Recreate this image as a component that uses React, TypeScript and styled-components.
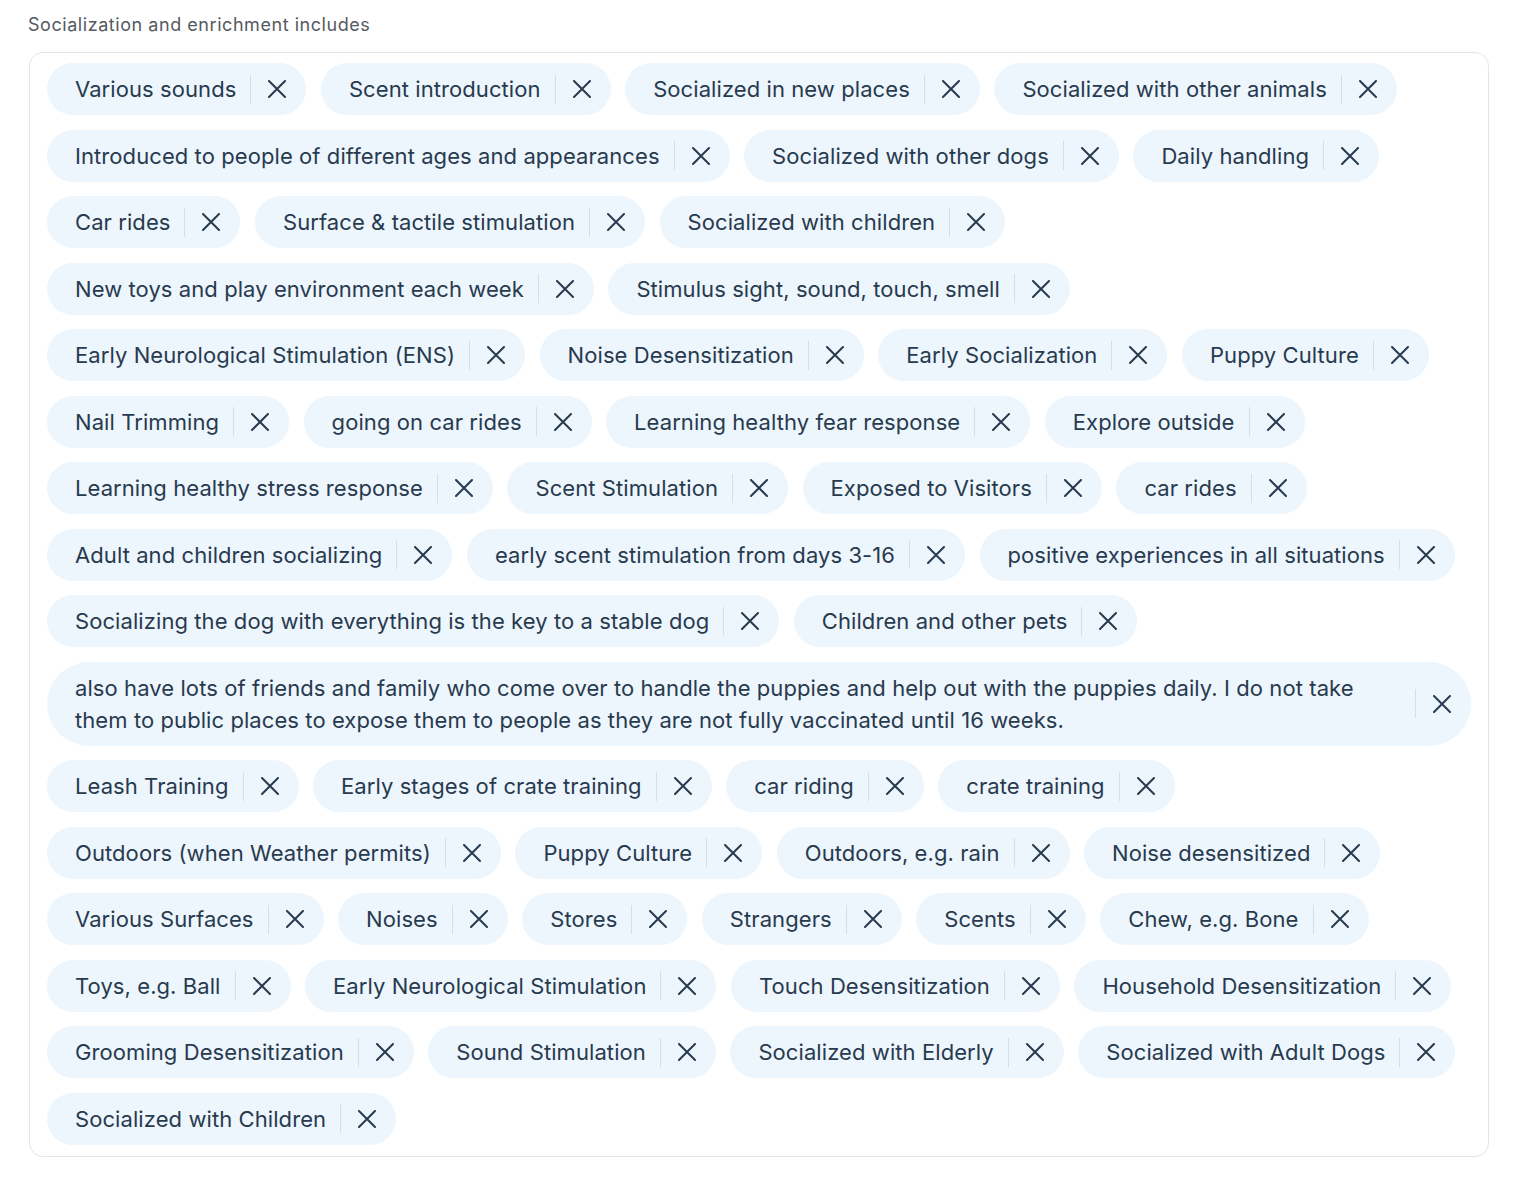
import React from "react";
import styled, { createGlobalStyle } from "styled-components";

const GlobalStyle = createGlobalStyle`
  html, body {
    margin: 0;
    padding: 0;
    background: #ffffff;
  }
  body {
    font-family: Inter, "Noto Sans", "Liberation Sans", sans-serif;
  }
`;

const Page = styled.div`
  padding: 12px 28px 40px 28px;
`;

const Label = styled.div`
  font-family: Inter, "Liberation Sans", sans-serif;
  font-size: 18px;
  letter-spacing: 0.55px;
  line-height: 25px;
  color: #545a61;
  margin-bottom: 15px;
`;

const Box = styled.div`
  border: 1.5px solid #e2e5e9;
  border-radius: 14px;
  padding: 10px 17px 11px 17px;
  margin-left: 1px;
`;

const ChipList = styled.div`
  display: flex;
  flex-wrap: wrap;
  gap: 14.5px 14.5px;
`;

const Chip = styled.div`
  display: flex;
  align-items: center;
  max-width: 100%;
  box-sizing: border-box;
  background: #edf5fd;
  border-radius: 999px;
  padding: 10px 20px 10px 28px;
  color: #283a4e;
  font-size: 22px;
  letter-spacing: 0.08px;
  line-height: 32px;
`;

const ChipText = styled.span`
  flex: 1 1 auto;
  min-width: 0;
`;

const Divider = styled.span`
  flex: none;
  width: 1px;
  height: 29px;
  background: #d6dde5;
  margin-left: 14px;
`;

const RemoveButton = styled.button`
  flex: none;
  display: flex;
  align-items: center;
  justify-content: center;
  margin-left: 17px;
  padding: 0;
  border: none;
  background: transparent;
  color: #283a4e;
  cursor: pointer;
  width: 18px;
  height: 18px;
`;

const XIcon = () => (
  <svg width="18" height="18" viewBox="0 0 18 18" fill="none">
    <path d="M1 1L17 17M17 1L1 17" stroke="currentColor" strokeWidth="2" strokeLinecap="round" />
  </svg>
);

const items: string[] = [
  "Various sounds",
  "Scent introduction",
  "Socialized in new places",
  "Socialized with other animals",
  "Introduced to people of different ages and appearances",
  "Socialized with other dogs",
  "Daily handling",
  "Car rides",
  "Surface & tactile stimulation",
  "Socialized with children",
  "New toys and play environment each week",
  "Stimulus sight, sound, touch, smell",
  "Early Neurological Stimulation (ENS)",
  "Noise Desensitization",
  "Early Socialization",
  "Puppy Culture",
  "Nail Trimming",
  "going on car rides",
  "Learning healthy fear response",
  "Explore outside",
  "Learning healthy stress response",
  "Scent Stimulation",
  "Exposed to Visitors",
  "car rides",
  "Adult and children socializing",
  "early scent stimulation from days 3-16",
  "positive experiences in all situations",
  "Socializing the dog with everything is the key to a stable dog",
  "Children and other pets",
  "also have lots of friends and family who come over to handle the puppies and help out with the puppies daily. I do not take them to public places to expose them to people as they are not fully vaccinated until 16 weeks.",
  "Leash Training",
  "Early stages of crate training",
  "car riding",
  "crate training",
  "Outdoors (when Weather permits)",
  "Puppy Culture",
  "Outdoors, e.g. rain",
  "Noise desensitized",
  "Various Surfaces",
  "Noises",
  "Stores",
  "Strangers",
  "Scents",
  "Chew, e.g. Bone",
  "Toys, e.g. Ball",
  "Early Neurological Stimulation",
  "Touch Desensitization",
  "Household Desensitization",
  "Grooming Desensitization",
  "Sound Stimulation",
  "Socialized with Elderly",
  "Socialized with Adult Dogs",
  "Socialized with Children",
];

export default function App() {
  return (
    <>
      <GlobalStyle />
      <Page>
        <Label>Socialization and enrichment includes</Label>
        <Box>
          <ChipList>
            {items.map((t, i) => (
              <Chip key={i}>
                <ChipText>{t}</ChipText>
                <Divider />
                <RemoveButton aria-label={`Remove ${t}`}>
                  <XIcon />
                </RemoveButton>
              </Chip>
            ))}
          </ChipList>
        </Box>
      </Page>
    </>
  );
}
